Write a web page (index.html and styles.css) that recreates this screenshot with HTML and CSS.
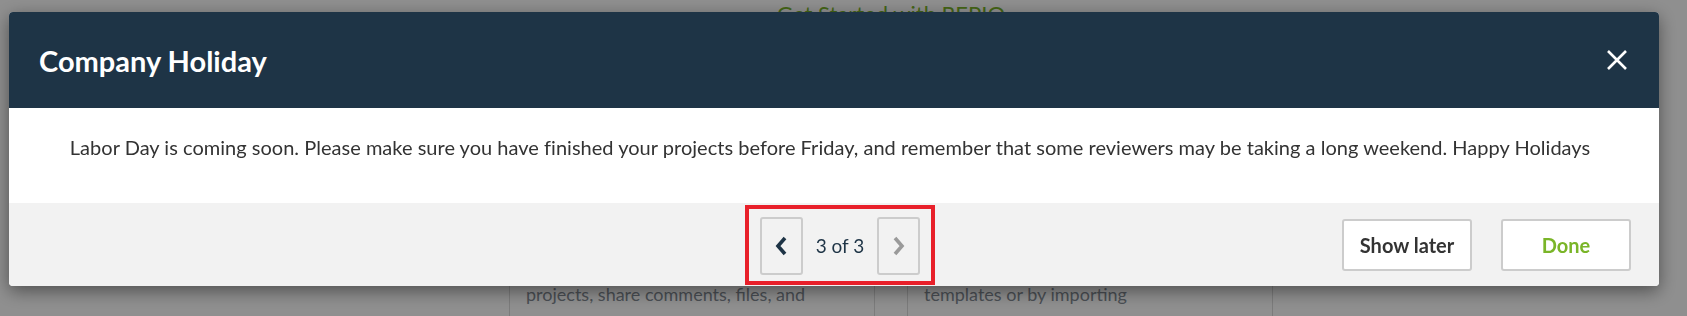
FILE: index.html
```html
<!DOCTYPE html>
<html lang="en">
<head>
    <meta charset="UTF-8">
    <title>Company Holiday - REPIO</title>
    <link rel="stylesheet" href="styles.css">
</head>
<body>

    <div class="page">
        <h1 class="page-title">Get Started with REPIO</h1>
        <div class="cards">
            <div class="card">
                <p>projects, share comments, files, and</p>
            </div>
            <div class="card">
                <p>templates or by importing</p>
            </div>
        </div>
    </div>

    <div class="overlay">
        <div class="modal">
            <div class="modal-header">
                <h2>Company Holiday</h2>
                <button class="close-btn" aria-label="Close">
                    <svg width="22" height="22" viewBox="0 0 22 22">
                        <path d="M2 2 L20 20 M20 2 L2 20" stroke="#fff" stroke-width="2.6" fill="none"/>
                    </svg>
                </button>
            </div>

            <div class="modal-body">
                <p>Labor Day is coming soon. Please make sure you have finished your projects before Friday, and remember that some reviewers may be taking a long weekend. Happy Holidays</p>
            </div>

            <div class="modal-footer">
                <div></div>
                <div class="pager">
                    <button class="pager-btn" aria-label="Previous">
                        <svg width="14" height="20" viewBox="0 0 14 20">
                            <path d="M11 2 L4 10 L11 18" stroke="#1e3446" stroke-width="3.6" fill="none"/>
                        </svg>
                    </button>
                    <span class="pager-count">3 of 3</span>
                    <button class="pager-btn" aria-label="Next">
                        <svg width="14" height="20" viewBox="0 0 14 20">
                            <path d="M3 2 L10 10 L3 18" stroke="#9a9a9a" stroke-width="3.6" fill="none"/>
                        </svg>
                    </button>
                </div>
                <div class="actions">
                    <button class="action-btn">Show later</button>
                    <button class="action-btn done">Done</button>
                </div>
            </div>
        </div>
    </div>

</body>
</html>
```

FILE: styles.css
```css
body {
    font-family: 'Lato', sans-serif;
    background-color: #ffffff;
    margin: 0;
    padding: 0;
    height: 316px;
    overflow: hidden;
}

/* page behind the dialog */
.page {
    margin-left: 509px;
    width: 764px;
}

.page-title {
    margin: 0;
    padding-top: 3px;
    font-size: 22px;
    line-height: 22px;
    font-weight: normal;
    color: #7ab528;
    text-align: center;
}

.cards {
    display: flex;
    gap: 32px;
    margin-top: 225px;
}

.card {
    flex: 1;
    box-sizing: border-box;
    height: 66px;
    border: 1px solid #dcdcdc;
    border-bottom: none;
    padding: 32px 16px 0;
}

.card p {
    margin: 0;
    font-size: 18px;
    line-height: 22px;
    color: #858d96;
}

/* dialog */
.overlay {
    position: fixed;
    inset: 0;
    background: rgba(0, 0, 0, 0.44);
    padding: 12px 28px 0 9px;
}

.modal {
    background: #ffffff;
    border-radius: 4px;
    box-shadow: 0px 5px 18px rgba(0, 0, 0, 0.45);
    overflow: hidden;
}

.modal-header {
    background: #1e3446;
    height: 96px;
    padding: 0 31px 0 30px;
    display: flex;
    align-items: center;
    justify-content: space-between;
}

.modal-header h2 {
    margin: 0;
    color: #ffffff;
    font-size: 29px;
    font-weight: bold;
}

.close-btn {
    background: none;
    border: none;
    padding: 0;
    display: flex;
    cursor: pointer;
}

.modal-body {
    height: 95px;
    box-sizing: border-box;
    padding: 26px 28px 0 20px;
    text-align: center;
}

.modal-body p {
    margin: 0;
    font-size: 20px;
    line-height: 26px;
    letter-spacing: 0.02px;
    color: #333;
}

.modal-footer {
    background: #f2f2f2;
    height: 83px;
    padding: 0 28px;
    display: grid;
    grid-template-columns: 1fr auto 1fr;
    align-items: center;
}

.pager {
    display: flex;
    align-items: center;
    border: 4px solid #e8202a;
    padding: 8px 11px 6px;
    margin-left: 12px;
}

.pager-btn {
    width: 43px;
    height: 58px;
    background: #f2f2f2;
    border: 2px solid #cccccc;
    border-radius: 3px;
    display: flex;
    align-items: center;
    justify-content: center;
    padding: 0;
    cursor: pointer;
}

.pager-count {
    padding: 0 13px;
    font-size: 19px;
    color: #1e3446;
}

.actions {
    justify-self: end;
    display: flex;
    gap: 29px;
}

.action-btn {
    width: 130px;
    height: 52px;
    background: #ffffff;
    border: 2px solid #cccccc;
    border-radius: 3px;
    font-family: 'Lato', sans-serif;
    font-size: 20px;
    font-weight: bold;
    color: #333;
    cursor: pointer;
}

.action-btn.done {
    color: #7ab528;
}
```
